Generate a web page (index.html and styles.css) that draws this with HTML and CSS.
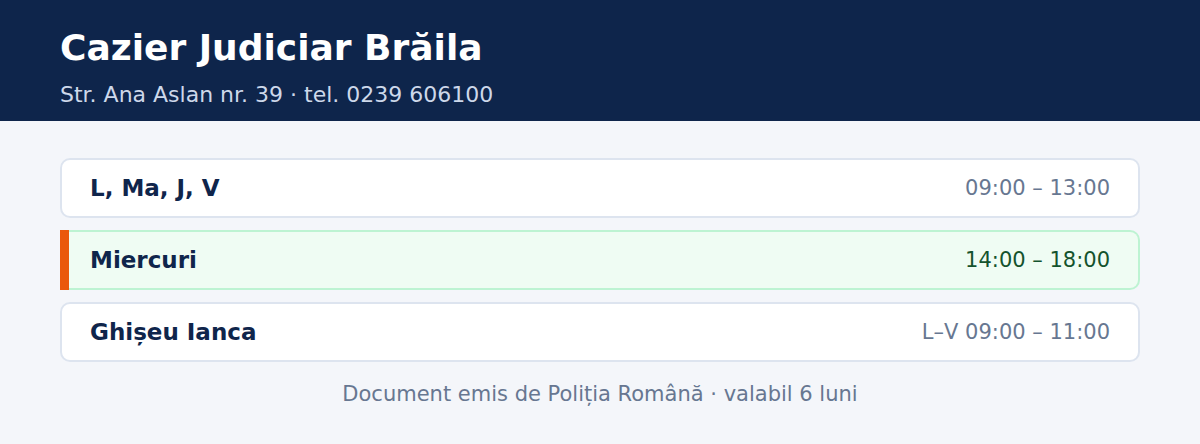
FILE: index.html
```html
<!DOCTYPE html>
<html lang="ro">

<head>
    <meta charset="UTF-8">
    <meta name="viewport" content="width=device-width, initial-scale=1.0">
    <title>Cazier Judiciar Brăila</title>
    <link rel="stylesheet" href="styles.css">
</head>

<body>
    <header class="top">
        <h1>Cazier Judiciar Brăila</h1>
        <p class="address">Str. Ana Aslan nr. 39 · tel. 0239 606100</p>
    </header>

    <main class="schedule">
        <div class="slot">
            <span class="day">L, Ma, J, V</span>
            <span class="hours">09:00 – 13:00</span>
        </div>
        <div class="slot slot-today">
            <span class="day">Miercuri</span>
            <span class="hours">14:00 – 18:00</span>
        </div>
        <div class="slot">
            <span class="day">Ghișeu Ianca</span>
            <span class="hours">L–V 09:00 – 11:00</span>
        </div>
        <p class="note">Document emis de Poliția Română · valabil 6 luni</p>
    </main>
</body>

</html>
```

FILE: styles.css
```css
body {
    font-family: 'DejaVu Sans', sans-serif;
    margin: 0;
    padding: 0;
    background: #f4f6fa;
    color: #0f254b;
}

.top {
    background: #0e254b;
    padding: 27px 60px 11px;
}

.top h1 {
    margin: 0;
    font-size: 36px;
    line-height: 42px;
    font-weight: bold;
    color: #fff;
}

.address {
    margin: 11px 0 0;
    font-size: 22px;
    line-height: 30px;
    color: #cdd8ea;
}

.schedule {
    padding: 37px 60px 0;
    display: flex;
    flex-direction: column;
    gap: 12px;
}

.slot {
    display: flex;
    justify-content: space-between;
    align-items: center;
    height: 60px;
    box-sizing: border-box;
    padding: 0 28px;
    background: #fff;
    border: 2px solid #dde4ef;
    border-radius: 10px;
}

.day {
    font-size: 23px;
    font-weight: bold;
    color: #0f254b;
}

.hours {
    font-size: 21px;
    color: #677791;
}

/* ziua curenta: bara portocalie in stanga */
.slot-today {
    background: #effcf3;
    border-color: #bdf3d2;
    border-left: none;
    border-radius: 0 10px 10px 0;
    margin-left: 9px;
    padding-left: 21px;
    box-shadow: -9px 0 0 #ea580c;
}

.slot-today .hours {
    color: #14532d;
}

.note {
    margin: 8px 0 0;
    text-align: center;
    font-size: 21px;
    color: #677791;
}
```
